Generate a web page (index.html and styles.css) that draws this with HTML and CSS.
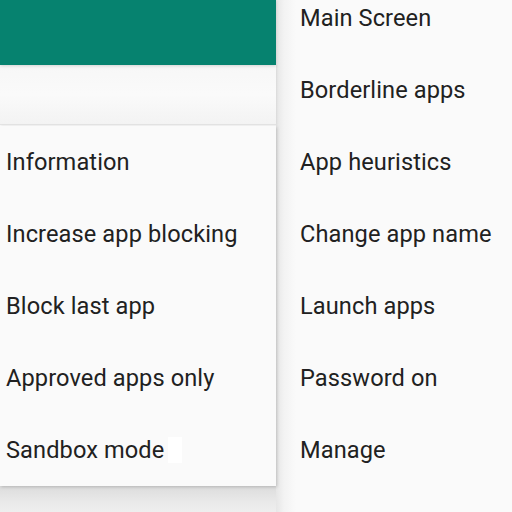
FILE: index.html
```html
<!DOCTYPE html>
<html>
<head>
<meta charset="utf-8">
<link rel="stylesheet" href="styles.css">
</head>
<body>
<div class="screen">
  <div class="left">
    <div class="appbar"></div>
    <div class="subbar"></div>
    <div class="menu">
      <div class="item">Information</div>
      <div class="item">Increase app blocking</div>
      <div class="item">Block last app</div>
      <div class="item">Approved apps only</div>
      <div class="item">Sandbox mode<span class="blank"></span></div>
    </div>
    <div class="below"></div>
  </div>
  <div class="right">
    <div class="list">
      <div class="item">Main Screen</div>
      <div class="item">Borderline apps</div>
      <div class="item">App heuristics</div>
      <div class="item">Change app name</div>
      <div class="item">Launch apps</div>
      <div class="item">Password on</div>
      <div class="item">Manage</div>
    </div>
  </div>
</div>
</body>
</html>
```

FILE: styles.css
```css
html, body {
  margin: 0;
  padding: 0;
  width: 512px;
  height: 512px;
  overflow: hidden;
  background: #fafafa;
  font-family: Roboto, "Noto Sans", sans-serif;
  color: #212121;
}
.screen {
  display: flex;
  width: 512px;
  height: 512px;
}
.left {
  width: 276px;
  flex: none;
  display: flex;
  flex-direction: column;
  position: relative;
  z-index: 2;
}
.appbar {
  height: 65px;
  background: #06826f;
  box-shadow: 0 1px 3px rgba(0,0,0,0.15);
  position: relative;
  z-index: 2;
}
.subbar {
  height: 59px;
  background: linear-gradient(#f7f7f7, #fafafa 50%, #f3f3f3);
  border-bottom: 1px solid #e4e4e4;
  box-shadow: 1px 0 2px rgba(0,0,0,0.06);
}
.menu {
  background: #fafafa;
  margin-top: 1px;
  box-shadow: 1px 1px 3px rgba(0,0,0,0.18);
  position: relative;
  z-index: 1;
}
.item {
  height: 72px;
  display: flex;
  align-items: center;
  font-size: 23.6px;
  letter-spacing: 0.1px;
  white-space: nowrap;
}
.menu .item {
  padding-left: 6px;
}
.blank {
  display: inline-block;
  width: 14px;
  height: 26px;
  background: #ffffff;
  margin-left: 4px;
}
.below {
  flex: 1;
  background: linear-gradient(#dcdcdc, #e9e9e9 60%, #eeeeee);
}
.right {
  flex: 1;
  background: linear-gradient(to right, #e6e6e6, #f3f3f3 8px, #fafafa 20px);
  overflow: hidden;
}
.list {
  margin-top: -18px;
}
.right .item {
  padding-left: 24px;
}
```
